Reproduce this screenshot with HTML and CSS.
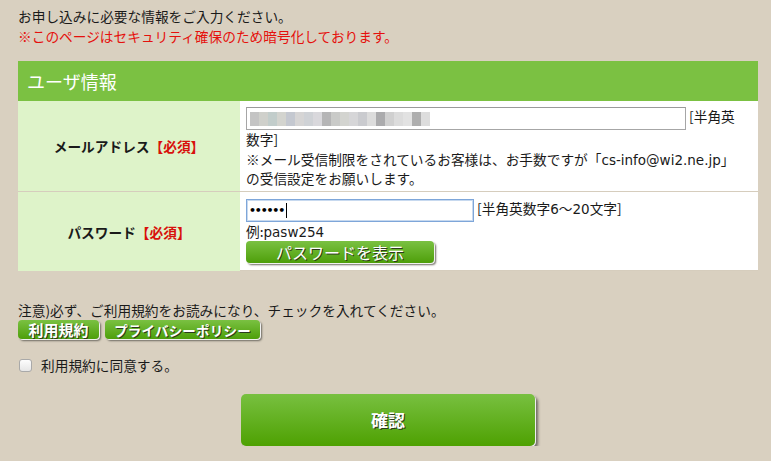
FILE: index.html
```html
<!DOCTYPE html>
<html lang="ja">
<head>
<meta charset="utf-8">
<link rel="stylesheet" href="styles.css">
</head>
<body>
<div class="page">
  <div class="intro">
    <p>お申し込みに必要な情報をご入力ください。</p>
    <p class="red">※このページはセキュリティ確保のため暗号化しております。</p>
  </div>

  <div class="form-table">
    <div class="head">ユーザ情報</div>

    <div class="label">メールアドレス<span class="req">【必須】</span></div>
    <div class="value value-mail">
      <span class="field mail-field"><span class="blur">
        <i style="background:#c4c4c4"></i><i style="background:#cfd0cb"></i><i style="background:#c2cdcb"></i><i style="background:#d3d4cf"></i><i style="background:#c4c8d0"></i><i style="background:#d6d5d5"></i><i style="background:#cfd2d6"></i><i style="background:#d9d8dc"></i><i style="background:#b5b5b6"></i><i style="background:#c9cac8"></i><i style="background:#d3d4d0"></i><i style="background:#d6d6d8"></i><i style="background:#cacbcf"></i><i style="background:#dcdcdc"></i><i style="background:#ababad"></i><i style="background:#d0d0d0"></i><i style="background:#dcdcdc"></i><i style="background:#e2e2e2"></i><i style="background:#aeaeae"></i><i style="background:#dddddd"></i>
      </span></span> [半角英<br>数字]
      <div class="mail-note">
        <span class="nowrap">※メール受信制限をされているお客様は、お手数ですが「<span class="latin">cs-info@wi2.ne.jp</span>」</span><br>
        の受信設定をお願いします。
      </div>
    </div>

    <div class="label label-last">パスワード<span class="req">【必須】</span></div>
    <div class="value value-last">
      <span class="field pass-field"><span class="dots">••••••</span><span class="caret"></span></span> [半角英数字<span class="latin">6</span>〜<span class="latin">20</span>文字]<br>
      例:<span class="latin">pasw254</span><br>
      <span class="btn btn-show">パスワードを表示</span>
    </div>
  </div>

  <p class="note">注意)必ず、ご利用規約をお読みになり、チェックを入れてください。</p>
  <div class="links">
    <span class="btn btn-small btn-terms">利用規約</span>
    <span class="btn btn-small btn-privacy">プライバシーポリシー</span>
  </div>

  <label class="agree"><span class="checkbox"></span>利用規約に同意する。</label>

  <div class="submit-row">
    <span class="btn btn-submit">確認</span>
  </div>
</div>
</body>
</html>
```

FILE: styles.css
```css
* { box-sizing: border-box; }

html, body {
  margin: 0;
  background: #d9d0c0;
}

body {
  font-family: "Noto Sans CJK JP", "DejaVu Sans", sans-serif;
  font-size: 13.7px;
  line-height: 18px;
  color: #1a1a1a;
}

.latin {
  font-family: "DejaVu Sans", sans-serif;
  font-size: 13.5px;
}

.nowrap { white-space: nowrap; }

.page {
  padding: 6px 13px 0 18px;
}

.intro p {
  margin: 0;
  line-height: 20px;
}

.red { color: #e5100d; }

.form-table {
  margin-top: 15px;
  width: 740px;
  display: grid;
  grid-template-columns: 222px 518px;
}

.head {
  grid-column: 1 / 3;
  height: 40px;
  background: #7bc142;
  color: #fff;
  font-size: 18px;
  line-height: 40px;
  padding-left: 9px;
}

.label {
  background: #def3c9;
  font-weight: bold;
  display: flex;
  align-items: center;
  justify-content: center;
  border-bottom: 1px solid #d6cdbd;
}

.label-last, .value-last { border-bottom: none; }

.req { color: #d8100b; }

.value {
  background: #fff;
  padding: 6px;
  border-bottom: 1px solid #d6cdbd;
}

.value-mail { padding-top: 6px; padding-bottom: 4px; }
.value-last { padding-top: 7px; padding-bottom: 7px; }

.mail-note { margin-top: 2px; }

.field {
  display: inline-block;
  vertical-align: middle;
  height: 23px;
  background: #fff;
  position: relative;
}

.mail-field {
  width: 440px;
  border: 1px solid #a6a6a6;
  border-top-color: #9a9a9a;
  padding: 4px 3px;
}

.blur {
  display: flex;
  height: 14px;
  filter: blur(0.6px);
}

.blur i {
  display: block;
  width: 9px;
  height: 14px;
}

.pass-field {
  width: 228px;
  border: 1px solid #7ea6d9;
  box-shadow: inset 0 0 0 1px #c7d9ef;
  padding-left: 2px;
  color: #000;
  display: inline-flex;
  align-items: center;
}

.dots {
  font-family: "DejaVu Sans", sans-serif;
  font-size: 11px;
  letter-spacing: -1.2px;
  font-weight: bold;
}

.caret {
  display: inline-block;
  width: 1px;
  height: 15px;
  background: #000;
  margin-left: 2px;
}

.btn {
  display: inline-flex;
  align-items: center;
  justify-content: center;
  color: #fff;
  border-radius: 4px;
  background: linear-gradient(#7ac142, #4e9f0a);
  box-shadow: 1px 1px 0 #f2f2f2, 2px 2px 2px #6e6a62;
  text-shadow: 1px 1px 0 #2b3a1c;
}

.btn-show {
  width: 188px;
  height: 22px;
  font-size: 16px;
  vertical-align: top;
}

.note {
  margin: 30px 0 0 0;
}

.links {
  display: flex;
  gap: 6px;
  margin-top: 1px;
}

.btn-small {
  height: 19px;
  font-size: 15px;
  font-weight: bold;
}

.btn-terms { width: 81px; }
.btn-privacy { width: 155px; font-size: 13.5px; letter-spacing: 0.2px; }

.agree {
  display: flex;
  align-items: center;
  margin-top: 17px;
  height: 18px;
}

.checkbox {
  width: 13px;
  height: 13px;
  border: 1px solid #a9a9a9;
  border-radius: 3px;
  background: linear-gradient(#fdfdfd, #e6e6e6);
  margin: 0 9px 0 1px;
}

.submit-row {
  margin-top: 20px;
  padding-left: 223px;
}

.btn-submit {
  width: 294px;
  height: 52px;
  font-size: 17px;
  font-weight: bold;
  border-radius: 5px;
  background: linear-gradient(#78c040, #4ea102);
  box-shadow: 1px 1px 0 #f0f0f0, 3px 3px 3px #6e6a62;
}
```
